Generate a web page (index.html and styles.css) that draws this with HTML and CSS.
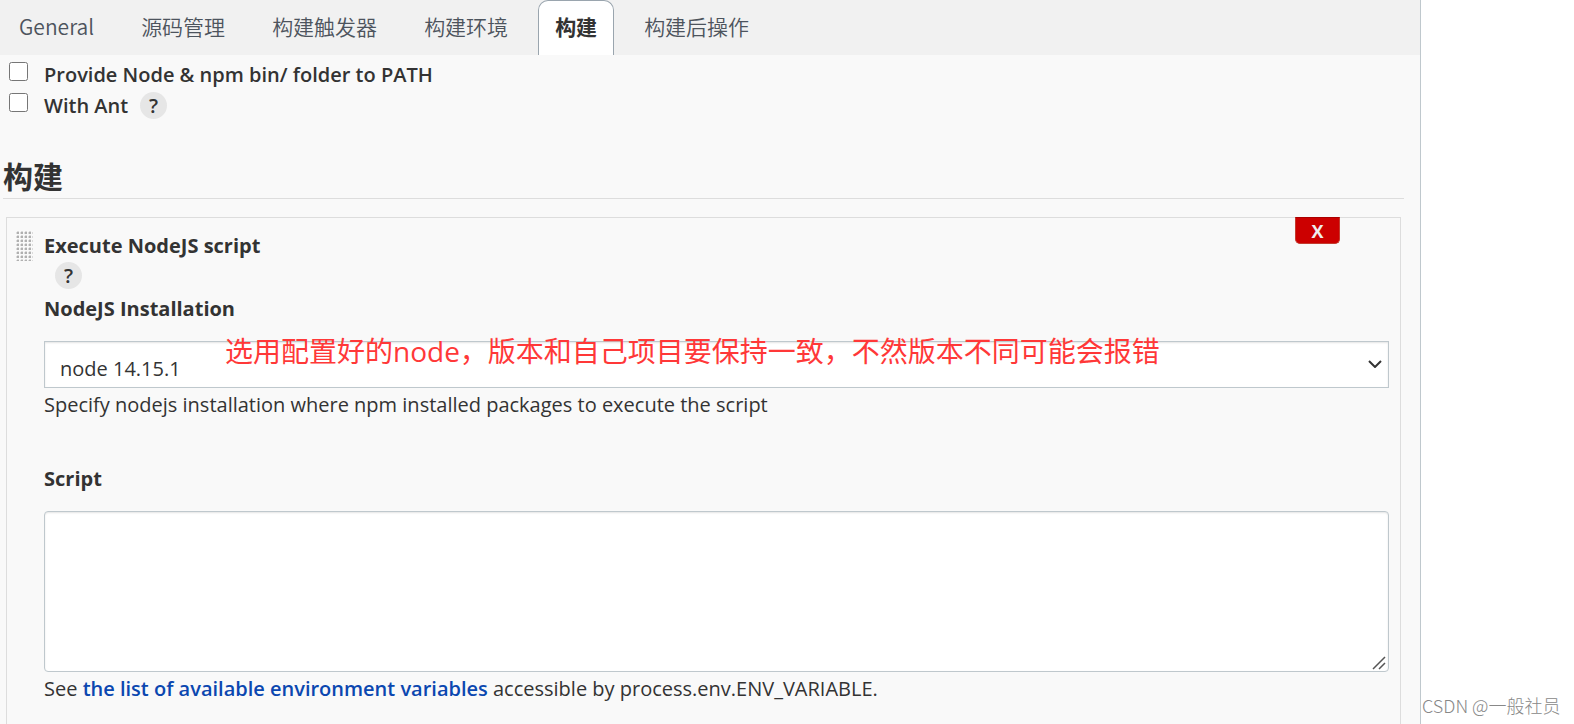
FILE: index.html
```
<!DOCTYPE html>
<html lang="zh-CN">
<head>
  <meta charset="utf-8">
  <meta name="viewport" content="width=device-width, initial-scale=1.0">
  <title>构建</title>
  <link rel="stylesheet" href="styles.css">
</head>
<body>

<main class="config">
  <!-- Tabs -->
  <nav class="tabs">
    <a class="tab" href="#general">General</a>
    <a class="tab" href="#scm">源码管理</a>
    <a class="tab" href="#triggers">构建触发器</a>
    <a class="tab" href="#env">构建环境</a>
    <a class="tab active" href="#build">构建</a>
    <a class="tab" href="#post">构建后操作</a>
  </nav>

  <div class="options">
    <div class="option">
      <input type="checkbox" id="npm-path">
      <label for="npm-path">Provide Node &amp; npm bin/ folder to PATH</label>
    </div>
    <div class="option">
      <input type="checkbox" id="with-ant">
      <label for="with-ant">With Ant</label>
      <button type="button" class="help">?</button>
    </div>
  </div>

  <!-- Build section -->
  <section class="build" id="build">
    <h2>构建</h2>
    <div class="step">
      <div class="handle"></div>
      <button type="button" class="delete">X</button>
      <h3>Execute NodeJS script</h3>
      <button type="button" class="help step-help">?</button>

      <label class="name" for="node">NodeJS Installation</label>
      <div class="field">
        <select id="node">
          <option>node 14.15.1</option>
        </select>
        <svg class="arrow" viewBox="0 0 14 8" width="14" height="8"><path d="M1 1l6 6 6-6" fill="none" stroke="#333" stroke-width="2"/></svg>
        <span class="note">选用配置好的node，版本和自己项目要保持一致，不然版本不同可能会报错</span>
      </div>
      <p class="desc">Specify nodejs installation where npm installed packages to execute the script</p>

      <label class="name script-name" for="script">Script</label>
      <div class="field">
        <textarea id="script"></textarea>
        <svg class="grip" viewBox="0 0 14 14" width="14" height="14"><path d="M1 13L13 1M7 13l6-6" fill="none" stroke="#555" stroke-width="1.5"/></svg>
      </div>
      <p class="desc">See <a href="#vars">the list of available environment variables</a> accessible by process.env.ENV_VARIABLE.</p>
    </div>
  </section>
</main>

<aside class="side">CSDN @一般社员</aside>

</body>
</html>
```
FILE: styles.css
```
* {
  box-sizing: border-box;
}

body {
  display: flex;
  min-height: 100vh;
  margin: 0;
  background: #fff;
  color: #333;
  font-family: "Open Sans", "Noto Sans CJK SC", sans-serif;
  font-size: 20px;
  line-height: 30px;
}

.config {
  flex: 1;
  display: flex;
  flex-direction: column;
  background: #f9f9f9;
  border-right: 1px solid #bfc8cd;
}

/* tabs */
.tabs {
  display: flex;
  gap: 13px;
  height: 55px;
  padding-left: 2px;
  background: #f1f1f1;
}

.tab {
  padding: 10px 16px;
  border: 1px solid transparent;
  border-bottom: 0;
  color: #4d545d;
  font-family: "Noto Sans CJK SC", sans-serif;
  font-size: 21px;
  font-weight: 350;
  text-decoration: none;
}

.tab.active {
  background: #fff;
  border-color: #9aa5ae;
  border-radius: 10px 10px 0 0;
  color: #333;
  font-weight: bold;
}

/* checkboxes */
.options {
  padding: 4px 9px;
}

.option {
  display: flex;
  align-items: center;
  height: 31px;
  font-weight: 600;
}

.option input {
  width: 19px;
  height: 19px;
  margin: 0 16px 6px 0;
}

.help {
  width: 27px;
  height: 27px;
  padding: 0;
  border: 0;
  border-radius: 50%;
  background: #e6e6e6;
  color: #333;
  font: 600 20px/27px "Open Sans", sans-serif;
}

.option .help {
  margin-left: 12px;
}

/* build */
.build {
  flex: 1;
  display: flex;
  flex-direction: column;
  padding: 32px 16px 0 3px;
}

h2 {
  margin: 0 0 18px;
  padding-bottom: 1px;
  border-bottom: 1px solid #ddd;
  font-size: 30px;
  line-height: 40px;
}

.step {
  position: relative;
  flex: 1;
  margin: 0 3px;
  padding: 12px 11px 0 37px;
  border: 1px solid #ddd;
  border-bottom: 0;
}

.handle {
  position: absolute;
  top: 12px;
  left: 8px;
  width: 18px;
  height: 31px;
  background: radial-gradient(circle at 3px 3px, #b0b0b0 1px, transparent 2px) 0 0 / 4px 4px;
}

.delete {
  position: absolute;
  top: -1px;
  right: 60px;
  width: 45px;
  height: 27px;
  padding: 0;
  border: 1px solid #c43b2f;
  border-top-color: #a00;
  border-radius: 0 0 5px 5px;
  background: #c00;
  color: #eee;
  font: bold 18px "Open Sans", sans-serif;
}

h3 {
  margin: 0;
  font-size: 20px;
  line-height: 32px;
}

.step-help {
  display: block;
  margin-left: 11px;
}

.name {
  display: block;
  margin: 5px 0 17px;
  font-weight: bold;
}

.field {
  position: relative;
}

select {
  display: block;
  width: 100%;
  height: 47px;
  padding: 8px 15px 0;
  appearance: none;
  border: 1px solid #bfc8cd;
  border-radius: 0;
  background: #fff;
  box-shadow: inset 0 1px 2px #e4e4e4;
  color: #333;
  font: 20px "Open Sans", sans-serif;
}

.arrow {
  position: absolute;
  top: 19px;
  right: 7px;
}

.note {
  position: absolute;
  top: -8px;
  left: 181px;
  color: #ff3838;
  font-size: 28px;
  line-height: 36px;
  white-space: nowrap;
  pointer-events: none;
}

.desc {
  margin: 2px 0 0;
}

.script-name {
  margin-top: 44px;
}

textarea {
  display: block;
  width: 100%;
  height: 161px;
  resize: none;
  border: 1px solid #bfc8cd;
  border-radius: 4px;
  background: #fff;
  box-shadow: inset 0 1px 2px #e4e4e4;
  font: 20px "Liberation Mono", monospace;
}

.grip {
  position: absolute;
  right: 3px;
  bottom: 2px;
  pointer-events: none;
}

.desc a {
  color: #0b47b0;
  font-weight: 600;
  text-decoration: none;
}

/* watermark */
.side {
  align-self: flex-end;
  width: 153px;
  padding: 0 0 4px 1px;
  color: #888;
  font-family: "Noto Sans CJK SC", sans-serif;
  font-size: 18px;
  font-weight: 300;
  white-space: nowrap;
}
```
